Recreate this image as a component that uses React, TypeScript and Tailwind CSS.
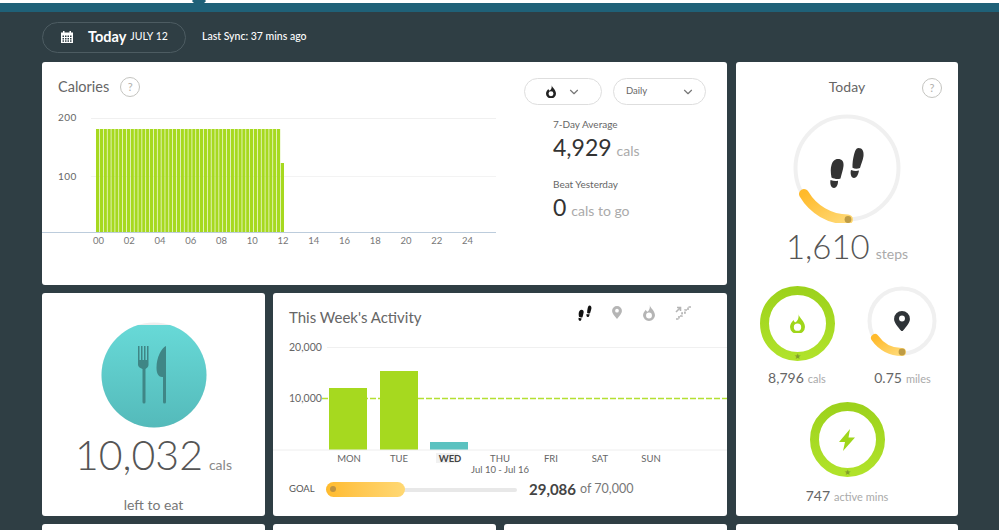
import { ChevronDown } from "lucide-react";

const HOURS = ["00", "02", "04", "06", "08", "10", "12", "14", "16", "18", "20", "22", "24"];
const DAYS = ["MON", "TUE", "WED", "THU", "FRI", "SAT", "SUN"];

function Help() {
  return (
    <span className="flex h-5 w-5 items-center justify-center rounded-full border border-[#c4c4c0] text-[11px] text-[#b0b0ac]">
      ?
    </span>
  );
}

function Flame({ size = 15, color = "#222" }: { size?: number; color?: string }) {
  return (
    <svg width={size} height={size * 1.33} viewBox="0 0 15 20" fill={color}>
      <path
        fillRule="evenodd"
        d="M8.5 0C9 4 15 7 15 13a7.5 7 0 0 1-15 0c0-3 2-5 3.5-7 .5 1.5 1.2 2.2 2.2 2.4C8 6.500 9 3.500 8.500 0ZM7.500 9.500a3.700 3.700 0 1 0 0 7.400 3.700 3.700 0 0 0 0-7.400Z"
      />
    </svg>
  );
}

function Pin({ size = 16, color = "#333", hole = "#fff" }: { size?: number; color?: string; hole?: string }) {
  return (
    <svg width={size} height={size * 1.3} viewBox="0 0 16 21">
      <path fill={color} d="M8 0a8 8 0 0 1 8 8c0 4-4 8-8 13C4 16 0 12 0 8a8 8 0 0 1 8-8Z" />
      <circle cx="8" cy="7.500" r="3" fill={hole} />
    </svg>
  );
}

function Steps({ width = 36, color = "#333" }: { width?: number; color?: string }) {
  return (
    <svg width={width} height={width * 1.14} viewBox="0 0 36 41" fill={color}>
      <path d="M9 12c4 0 6 2.500 5.500 7-.4 4-2 8-3 12.500-2.500 1-6 .5-9-1C1.500 25 1.500 21 2.500 18 3.500 14.500 5.500 12 9 12Z" />
      <path d="M1.500 33c2.500 1 5 1.300 7.500.8.200 3.200-1.200 7.200-4 7.200-3 0-4.200-4-3.500-8Z" />
      <path d="M29.500 1c4 0 5.500 3.500 5 8-.4 4-2.500 8-3.500 12-2.500 1-5.500.8-7.500-.2-.2-4.500.5-9 1.500-13C26 4 27 1 29.500 1Z" />
      <path d="M22 23c3 1 5.500 1.200 8 .5-.5 3-2 7.500-5 7.500-3 0-4-4.500-3-8Z" />
    </svg>
  );
}

function Stairs() {
  return (
    <svg width="16" height="15" viewBox="0 0 16 15" fill="none" stroke="#b5b5b5" strokeWidth="1.600">
      <path d="M1 14h3v-3h3V8h3V5h3V2h3" strokeDasharray="2.500 1" />
      <path d="M1 7l4-4M2 2.500h3.500V6" />
    </svg>
  );
}

function Ring({
  size,
  radius,
  width,
  color,
  arc,
  arcWidth,
  dot,
  id,
  star,
  children,
}: {
  size: number;
  radius: number;
  width: number;
  color: string;
  arc?: string;
  arcWidth?: number;
  dot?: [number, number];
  id: string;
  star?: boolean;
  children?: React.ReactNode;
}) {
  const c = size / 2;
  return (
    <div className="relative flex items-center justify-center" style={{ width: size, height: size }}>
      <svg width={size} height={size} className="absolute inset-0">
        <defs>
          <linearGradient id={id} x1="0" y1="0" x2="1" y2="1">
            <stop offset="0" stopColor="#ffba2b" />
            <stop offset="1" stopColor="#ffd873" />
          </linearGradient>
          <linearGradient id={`${id}-g`} x1="0" y1="0" x2="0" y2="1">
            <stop offset="0" stopColor="#9dd21c" />
            <stop offset="1" stopColor="#b0e22a" />
          </linearGradient>
        </defs>
        <circle
          cx={c}
          cy={c}
          r={radius}
          fill="none"
          strokeWidth={width}
          stroke={color === "green" ? `url(#${id}-g)` : color}
        />
        {arc && (
          <path d={arc} fill="none" stroke={`url(#${id})`} strokeWidth={arcWidth} strokeLinecap="round" />
        )}
        {dot && <circle cx={dot[0]} cy={dot[1]} r="3.400" fill="#bf9c45" />}
        {star && (
          <text x={c} y={size - 2.500} textAnchor="middle" fontSize="8" fill="#7f9f2a">
            ★
          </text>
        )}
      </svg>
      <div className="relative">{children}</div>
    </div>
  );
}

function CaloriesChart() {
  const bars = Array.from({ length: 48 }, (_, i) => i);
  return (
    <svg width="454" height="140" className="text-[9.500px]">
      <line x1="49" x2="454" y1="8.500" y2="8.500" stroke="#f0f0f0" />
      <line x1="49" x2="454" y1="66.500" y2="66.500" stroke="#f3f3f3" />
      <text x="16" y="11" fill="#666" fontSize="10" letterSpacing=".4">200</text>
      <text x="16" y="70" fill="#666" fontSize="10" letterSpacing=".4">100</text>
      {bars.map((i) => (
        <rect key={i} x={54 + i * 3.85} y="19" width="3.200" height="103" fill="#a6d91f" />
      ))}
      <rect x="238.800" y="53" width="3.200" height="69" fill="#a6d91f" />
      <line x1="0" x2="454" y1="122.500" y2="122.500" stroke="#bcccdc" />
      {HOURS.map((h, i) => (
        <text key={h} x={56.500 + i * 30.750} y="134" textAnchor="middle" fill="#777" fontSize="9.500">
          {h}
        </text>
      ))}
    </svg>
  );
}

function WeekChart() {
  const xs = [76, 126, 177, 227, 278, 327, 378];
  return (
    <svg width="454" height="142">
      <line x1="54" x2="454" y1="12.500" y2="12.500" stroke="#f0f0f0" />
      <text x="16" y="16" fill="#666" fontSize="10.500">20,000</text>
      <text x="16" y="67" fill="#666" fontSize="10.500">10,000</text>
      <line x1="49" x2="454" y1="63.500" y2="63.500" stroke="#b4e033" strokeWidth="1.500" strokeDasharray="6 2" />
      <rect x="56" y="53" width="38" height="62" fill="#a6d91f" />
      <rect x="107" y="36" width="38" height="79" fill="#a6d91f" />
      <rect x="157" y="107" width="38" height="8" fill="#5bc2c0" />
      <line x1="0" x2="454" y1="115" y2="115" stroke="#eeeeee" />
      <rect x="163" y="118" width="22" height="10" fill="#f1f1f1" />
      {DAYS.map((d, i) => (
        <text
          key={d}
          x={xs[i]}
          y="127"
          textAnchor="middle"
          fill={d === "WED" ? "#444" : "#666"}
          fontWeight={d === "WED" ? 700 : 400}
          fontSize="9.500"
        >
          {d}
        </text>
      ))}
      <text x="227" y="138" textAnchor="middle" fill="#666" fontSize="9.500">Jul 10 - Jul 16</text>
    </svg>
  );
}

function Food() {
  return (
    <svg width="106" height="106" viewBox="0 0 106 106">
      <defs>
        <linearGradient id="food" x1="0" y1="0" x2="0" y2="1">
          <stop offset="0" stopColor="#68dad8" />
          <stop offset="1" stopColor="#54baba" />
        </linearGradient>
        <clipPath id="foodclip">
          <rect x="0" y="3" width="106" height="103" />
        </clipPath>
      </defs>
      <circle cx="53" cy="53" r="52.500" fill="#eeeeee" />
      <circle cx="53" cy="53" r="52.500" fill="url(#food)" clipPath="url(#foodclip)" />
      <g fill="#3f8686">
        <path d="M37 24h1.500v14H40V24h1.500v14H43V24h1.500v14H46V24h1.500v19c0 2-2 3-3 4v33a1.500 1.500 0 0 1-3 0V47c-2-1-4.500-2-4.500-4Z" />
        <path d="M65 24v56a1.500 1.500 0 0 1-3 0V55h-1c-3 0-5.500-3-5.500-9 0-11 5-20 9.500-22Z" />
      </g>
    </svg>
  );
}

export default function App() {
  return (
    <div className="relative h-[530px] w-[999px] overflow-hidden bg-[#2f3e44] [font-family:Lato,sans-serif]">
      <div className="h-[3px] bg-white" />
      <div className="h-[9px] bg-[#1f6178]" />
      <div className="absolute left-[194px] top-[-4px] h-[10px] w-[10px] rotate-45 bg-[#1f6178]" />

      <div className="flex h-[50px] items-center pl-[42px]">
        <div className="flex h-[31px] w-[144px] items-center rounded-full border border-[#4d5c62] pl-[18px] text-white">
          <svg width="12" height="12" viewBox="0 0 12 12" fill="#fff">
            <path d="M2 0h1.500v1.500h5V0H10v1.500h2V12H0V1.500h2Z" />
            <g fill="#2f3e44">
              <rect x="1.500" y="4.500" width="1.500" height="1.500" />
              <rect x="4" y="4.500" width="1.500" height="1.500" />
              <rect x="6.500" y="4.500" width="1.500" height="1.500" />
              <rect x="9" y="4.500" width="1.500" height="1.500" />
              <rect x="1.500" y="7" width="1.500" height="1.500" />
              <rect x="4" y="7" width="1.500" height="1.500" />
              <rect x="6.500" y="7" width="1.500" height="1.500" />
              <rect x="9" y="7" width="1.500" height="1.500" />
              <rect x="1.500" y="9.300" width="1.500" height="1.500" />
              <rect x="4" y="9.300" width="1.500" height="1.500" />
              <rect x="6.500" y="9.300" width="1.500" height="1.500" />
              <rect x="9" y="9.300" width="1.500" height="1.500" />
            </g>
          </svg>
          <span className="ml-[15px] text-[14.500px] font-bold">Today</span>
          <span className="ml-1 text-[10.500px]">JULY 12</span>
        </div>
        <span className="ml-4 text-[10.500px] font-medium text-white">Last Sync: 37 mins ago</span>
      </div>

      <div className="flex gap-[9px] pl-[42px]">
        <div className="flex w-[685px] flex-col gap-2">
          <section className="flex h-[223px] rounded-[3px] bg-white">
            <div className="w-[454px]">
              <div className="flex h-[48px] items-center gap-[11px] pl-4 pt-[2px] text-[14.500px] text-[#666]">
                Calories
                <Help />
              </div>
              <CaloriesChart />
            </div>
            <div className="pl-7 pt-4">
              <div className="flex gap-[11px]">
                <div className="flex h-[27px] w-[78px] items-center justify-center gap-[11px] rounded-full border border-[#dedede]">
                  <Flame size={10} />
                  <ChevronDown size={14} color="#777" />
                </div>
                <div className="flex h-[27px] w-[93px] items-center justify-between rounded-full border border-[#dedede] pl-3 pr-[10px] text-[9.500px] text-[#666]">
                  Daily
                  <ChevronDown size={14} color="#777" />
                </div>
              </div>
              <div className="pl-[29px] pt-[13px]">
                <div className="text-[10px] leading-3 text-[#666]">7-Day Average</div>
                <div className="mt-[3px] flex items-baseline gap-[5px] leading-7">
                  <span className="text-[23px] text-[#333]">4,929</span>
                  <span className="text-[14px] text-[#aaa]">cals</span>
                </div>
                <div className="mt-[13px] text-[10px] leading-3 text-[#666]">Beat Yesterday</div>
                <div className="mt-[3px] flex items-baseline gap-[5px] leading-7">
                  <span className="text-[23px] text-[#333]">0</span>
                  <span className="text-[14px] text-[#aaa]">cals to go</span>
                </div>
              </div>
            </div>
          </section>

          <div className="flex h-[223px] gap-2">
            <section className="flex w-[223px] flex-col items-center rounded-[3px] bg-white pt-[29px]">
              <Food />
              <div className="mt-[3px] flex items-baseline gap-[6px] leading-[48px]">
                <span className="text-[41px] font-light text-[#555]">10,032</span>
                <span className="text-[14px] text-[#888]">cals</span>
              </div>
              <div className="mt-[5px] text-[14px] text-[#777]">left to eat</div>
            </section>

            <section className="relative w-[454px] rounded-[3px] bg-white">
              <div className="flex h-[42px] items-center justify-between pl-4 pr-[36px] pt-[6px]">
                <span className="text-[15px] text-[#666]">This Week's Activity</span>
                <div className="flex w-[113px] items-center justify-between pb-2">
                  <Steps width={14} color="#111" />
                  <Pin size={10} color="#b5b5b5" />
                  <Flame size={12} color="#b5b5b5" />
                  <Stairs />
                </div>
              </div>
              <WeekChart />
              <div className="flex items-center pl-4 pt-[1px]">
                <span className="w-[37px] text-[9.500px] text-[#555]">GOAL</span>
                <div className="relative h-[15px] w-[191px]">
                  <div className="absolute top-[6px] h-[4px] w-full rounded-full bg-[#e8e8e8]" />
                  <div className="absolute flex h-[15px] w-[79px] items-center rounded-full bg-linear-to-r from-[#ffbb2c] to-[#ffd873] pl-[4px]">
                    <span className="h-[6px] w-[6px] rounded-full bg-[#bf9340]" />
                  </div>
                </div>
                <span className="ml-3 text-[15px] font-bold text-[#444]">29,086</span>
                <span className="ml-1 text-[12.500px] text-[#777]">of 70,000</span>
              </div>
            </section>
          </div>

          <div className="flex h-[40px] gap-2">
            <div className="w-[223px] rounded-[3px] bg-white" />
            <div className="w-[223px] rounded-[3px] bg-white" />
            <div className="w-[223px] rounded-[3px] bg-white" />
          </div>
        </div>

        <div className="flex w-[222px] flex-col gap-2">
          <section className="relative flex h-[454px] flex-col items-center rounded-[3px] bg-white pt-[17px]">
            <div className="absolute right-[16px] top-[16px]">
              <Help />
            </div>
            <div className="text-[14px] leading-4 text-[#666]">Today</div>
            <div className="mt-[18px]">
              <Ring
                id="steps"
                size={110}
                radius={51.500}
                width={4}
                color="#f0f0f0"
                arc="M56 106.500A51.500 51.500 0 0 1 12 81"
                arcWidth={10}
                dot={[56, 106.500]}
              >
                <Steps width={36} />
              </Ring>
            </div>
            <div className="mt-[3px] flex items-baseline gap-[6px] leading-10">
              <span className="text-[33px] font-light text-[#555]">1,610</span>
              <span className="text-[14px] text-[#aaa]">steps</span>
            </div>
            <div className="mt-[12px] grid w-full grid-cols-2">
              <div className="flex flex-col items-center pl-[11px]">
                <Ring id="cals" size={75} radius={33} width={9} color="green" star>
                  <Flame size={15} color="#9fd61a" />
                </Ring>
              </div>
              <div className="flex flex-col items-center pr-[1px]">
                <Ring
                  id="miles"
                  size={70}
                  radius={32.500}
                  width={4}
                  color="#f0f0f0"
                  arc="M35 66A32.500 32.500 0 0 1 8 52"
                  arcWidth={8}
                  dot={[35, 66]}
                >
                  <Pin size={16} color="#2f3438" />
                </Ring>
              </div>
            </div>
            <div className="mt-[6px] grid w-full grid-cols-2 text-[14px] text-[#666]">
              <div className="flex items-baseline justify-center gap-1 pl-[11px]">
                8,796 <span className="text-[11px] text-[#aaa]">cals</span>
              </div>
              <div className="flex items-baseline justify-center gap-1">
                0.75 <span className="text-[11px] text-[#aaa]">miles</span>
              </div>
            </div>
            <div className="mt-[14px]">
              <Ring id="active" size={75} radius={33} width={9} color="green" star>
                <svg width="16" height="22" viewBox="0 0 16 22" fill="#9fd61a">
                  <path d="M11 0 0 13h6L4 22 16 8.500H9.500Z" />
                </svg>
              </Ring>
            </div>
            <div className="mt-[8px] flex items-baseline gap-1 text-[14px] text-[#666]">
              747 <span className="text-[11px] text-[#aaa]">active mins</span>
            </div>
          </section>
          <div className="h-[40px] rounded-[3px] bg-white" />
        </div>
      </div>
    </div>
  );
}
